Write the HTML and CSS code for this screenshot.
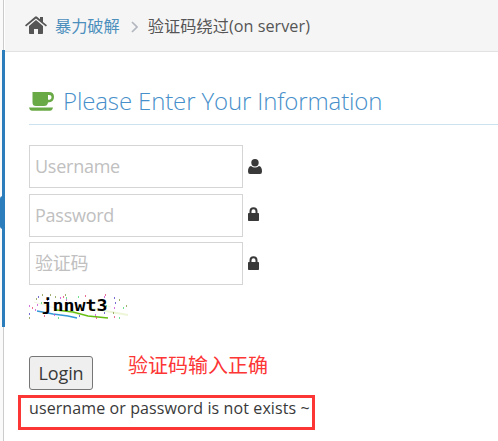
FILE: index.html
```html
<!DOCTYPE html>
<html lang="zh-CN">
<head>
<meta charset="utf-8">
<title>验证码绕过(on server)</title>
<link rel="stylesheet" href="styles.css">
</head>
<body>
<div class="layout">
  <aside class="sidebar"><div class="active-group"></div></aside>
  <div class="main">
    <nav class="breadcrumb">
      <svg class="home" viewBox="0 0 22 18"><path d="M11 4 4 10v7.200q0 .8.8.8H9v-5h4v5h4.200q.8 0 .8-.8V10z"/><path d="M0 9.300 10 .7q1-.8 2 0l3 2.600V1h3v5l4 3.300-1.100 1.300L11 2.400 1.100 10.600z"/></svg>
      <a class="crumb-link" href="#">暴力破解</a>
      <svg class="chevron" viewBox="0 0 7 12"><path d="M1 1l5 5-5 5"/></svg>
      <span class="crumb">验证码绕过(on server)</span>
    </nav>
    <main class="content">
      <h4 class="heading">
        <svg class="coffee" viewBox="0 0 25 19"><path fill-rule="evenodd" d="M3.500 0H20q5 0 5 5t-6 5.500Q18.500 14 15 14H7q-3.500 0-3.500-3.500zM19 3v4.800q3.500 0 3.500-2.600T19 3z"/><path d="M0 15.500h24q-.8 3.200-3 3.200H3q-2.200 0-3-3.200z"/></svg>
        <span>Please Enter Your Information</span>
      </h4>
      <form class="form">
        <label class="field"><input type="text" placeholder="Username"><svg class="user" viewBox="0 0 14 15"><circle cx="7" cy="3.700" r="3.700"/><path d="M3 7q4 3 8 0 3 .5 3 5.500 0 2.500-2 2.500H2q-2 0-2-2.500Q0 7.500 3 7z"/></svg></label>
        <label class="field"><input type="password" placeholder="Password"><svg class="lock" viewBox="0 0 11 14"><path fill-rule="evenodd" d="M1.500 6V4.300a4 4 0 0 1 8 0V6h.7q.8 0 .8.8v6.400q0 .8-.8.8H.8q-.8 0-.8-.8V6.800Q0 6 .8 6zm2 0h4V4.300a2 2 0 0 0-4 0z"/></svg></label>
        <label class="field"><input type="text" placeholder="验证码"><svg class="lock" viewBox="0 0 11 14"><path fill-rule="evenodd" d="M1.500 6V4.300a4 4 0 0 1 8 0V6h.7q.8 0 .8.8v6.400q0 .8-.8.8H.8q-.8 0-.8-.8V6.800Q0 6 .8 6zm2 0h4V4.300a2 2 0 0 0-4 0z"/></svg></label>
        <svg class="captcha" viewBox="0 0 100 30">
          <g fill="none">
            <path d="M5 8l45 13" stroke="#f1f8df"/><path d="M60 14l39 7" stroke="#eef6d9" stroke-width="2"/>
            <path d="M8 17l16 3 15 2 9 2" stroke="#3498d8" stroke-width="1.500"/>
            <path d="M27 16l17 2 15 4 20 2" stroke="#66bf10" stroke-width="1.500"/>
            <path d="M62 7l20 6" stroke="#f2fae5"/>
          </g>
          <g stroke-width="1.300">
            <path stroke="#c844d1" d="M0 12h1M6 16h1M8 11h1M31 4h1M37 6h1M75 3h1M85 14h1M25 21h1M66 21h1"/>
            <path stroke="#4b42c5" d="M9 3h1M0 20h1M18 6h1M50 22h1M85 4h1M86 9h1M75 19h1"/>
            <path stroke="#809843" d="M13 1h1M21 1h1M26 3h1M36 1h1M7 5h1M90 6h1M84 19h1M97 12h1M0 24h1"/>
            <path stroke="#e4416e" d="M76 1h1M34 3h1M56 2h1M3 14h1M15 22h1M67 24h1M85 23h1"/>
            <path stroke="#44d96e" d="M37 4h1M12 9h1M49 3h1M77 12h1M94 14h1M29 24h1M90 24h1"/>
          </g>
          <text x="12.500" y="17" textLength="66" lengthAdjust="spacingAndGlyphs">jnnwt3</text>
        </svg>
        <div class="actions"><button type="button">Login</button><span class="note">验证码输入正确</span></div>
      </form>
      <p class="message"><span>username or password is not exists ~</span></p>
    </main>
  </div>
</div>
</body>
</html>
```
FILE: styles.css
```css
* { box-sizing: border-box; }
body { margin: 0; overflow: hidden; background: #fff; color: #393939; font-family: "Open Sans", "Noto Sans CJK SC", sans-serif; font-size: 16px; }
svg { display: block; flex: none; }
.layout { display: flex; height: 441px; }
.sidebar { position: relative; width: 5px; flex: none; padding-top: 50px; background: linear-gradient(90deg, #fafafa 3px, #ccc 3px, #ccc 4px, #fff 4px); }
.active-group { width: 3px; height: 277px; margin-left: 2px; background: #2b7dbc; }
.sidebar::before { content: ""; position: absolute; left: 0; top: 196px; width: 3px; height: 33px; background: #2b7dbc; border-radius: 3px 0 0 3px; }
.main { flex: 1; min-width: 0; }
.breadcrumb { display: flex; align-items: center; height: 52px; margin-left: -1px; padding: 0 0 2px 21px; background: #f5f5f5; border-bottom: 1px solid #e2e2e2; white-space: nowrap; }
.home { width: 22px; height: 18px; margin-right: 8px; fill: #555; }
.crumb-link { color: #4c8fbd; text-decoration: none; font-size: 16.200px; }
.chevron { width: 7px; height: 12px; margin: 4px 10px 0 11px; fill: none; stroke: #b2b6bf; stroke-width: 1.700; }
.crumb { color: #555; font-size: 16.200px; letter-spacing: .04px; }
.heading { display: flex; align-items: center; height: 73px; margin: 0; padding-top: 25px; border-bottom: 1px solid #cce2ee; color: #478fca; font-size: 24px; font-weight: 300; letter-spacing: -.13px; white-space: nowrap; }
.content { padding-left: 24px; }
.coffee { width: 25px; height: 19px; margin: 1px 9px 0 0; fill: #69aa46; }
.form { display: flex; flex-direction: column; align-items: flex-start; padding-top: 20px; }
.field { display: flex; align-items: center; gap: 5px; height: 43px; margin-bottom: 5.500px; }
input { width: 214px; height: 43px; margin: 0; padding: 0 5px 1px; border: 1px solid #d5d5d5; border-radius: 0; font: 18px "Open Sans", "Noto Sans CJK SC", sans-serif; letter-spacing: -.25px; outline: none; }
input::placeholder { color: #c0c0c0; opacity: 1; }
.user { width: 14px; height: 15px; fill: #393939; }
.lock { width: 11px; height: 14px; margin-bottom: 2px; fill: #393939; }
.captcha { width: 100px; height: 30px; margin-top: 3px; overflow: visible; }
.captcha text { font: bold 16px "DejaVu Sans Mono", monospace; fill: #000; }
.actions { display: flex; align-items: center; height: 34px; margin-top: 32px; }
button { width: 64px; height: 34px; padding: 0; border: 1px solid #767676; border-radius: 3px; background: #efefef; color: #393939; font: 18px "Open Sans", sans-serif; letter-spacing: -.1px; }
.note { margin: -14px 0 0 35px; color: #fc3535; font-size: 20px; line-height: 24px; white-space: nowrap; }
.message { width: 297px; height: 35px; margin: 5px 0 0 -11px; padding-left: 8px; border: 3px solid #fc3535; font-size: 16px; letter-spacing: .1px; line-height: 20px; white-space: nowrap; }
```
